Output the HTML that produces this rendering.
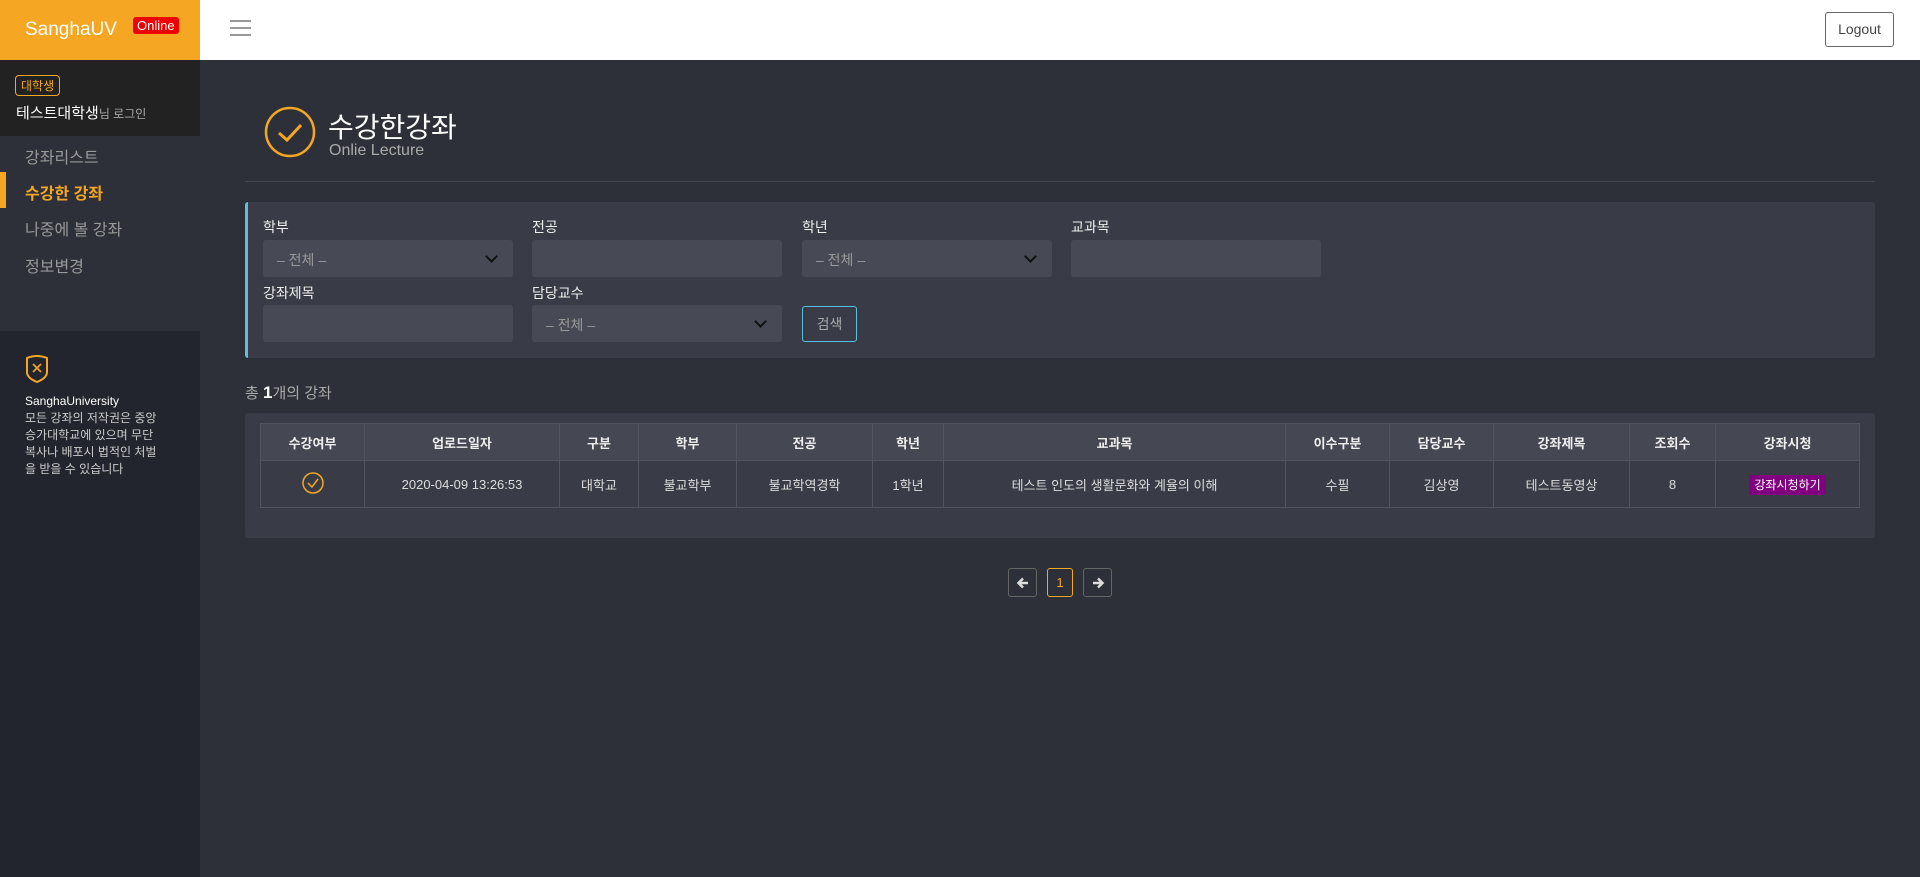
<!DOCTYPE html>
<html><head><meta charset="utf-8"><style>
*{box-sizing:border-box;margin:0;padding:0}
body{width:1920px;height:877px;overflow:hidden;background:#2e3039;font-family:"Liberation Sans","Noto Sans CJK KR",sans-serif;position:relative;color:#ddd}
.abs{position:absolute}
#logo{left:0;top:0;width:200px;height:60px;background:#f5a623}
#logo .t{left:25px;top:19px;color:#fff;font-size:19px}
#logo .b{left:133px;top:17px;background:#e00;color:#fff;font-size:13px;padding:1px 4px;border-radius:3px}
#top{left:200px;top:0;width:1720px;height:60px;background:#fff}
.hb{left:30px;width:21px;height:2px;background:#999}
#lo{left:1625px;top:12px;width:69px;height:35px;border:1px solid #666;border-radius:3px;color:#444;font-size:14px;text-align:center;line-height:33px}
#user{left:0;top:60px;width:200px;height:76px;background:#222}
#menu{left:0;top:136px;width:200px;height:195px;background:#2d3039}
#sf{left:0;top:331px;width:200px;height:546px;background:#22252d}
.mi{left:25px;font-size:16px;color:#999}
.lab{font-size:14px;color:#eee}
.inp{height:37px;width:250px;background:#474a55;border-radius:3px}
.sel:after{content:"";position:absolute;right:17px;top:12px;width:7px;height:7px;border-right:2px solid #111;border-bottom:2px solid #111;transform:rotate(45deg)}
.sel span{position:absolute;left:14px;top:10px;font-size:14px;color:#999}
table{border-collapse:collapse;position:absolute;left:260px;top:423px;width:1600px;font-size:13px}
th{background:#454753;height:37px;font-weight:bold;color:#eee;border:1px solid #52555f}
td{background:#393c47;height:47px;text-align:center;color:#ddd;border:1px solid #52555f}
.pg{top:568px;height:29px;border:1px solid #666;border-radius:3px;text-align:center;line-height:27px;font-size:13px;color:#ccc}
.pg svg{position:absolute;left:7px;top:7px}
</style></head><body>
<div id="logo" class="abs"><div class="abs t">SanghaUV</div><div class="abs b">Online</div></div>
<div id="top" class="abs"><div class="abs hb" style="top:20px"></div><div class="abs hb" style="top:27px"></div><div class="abs hb" style="top:34px"></div><div id="lo" class="abs">Logout</div></div>
<div id="user" class="abs"><div class="abs" style="left:15px;top:15px;border:1px solid #f5a623;border-radius:4px;color:#f5a623;font-size:12px;padding:1px 5px">대학생</div><div class="abs" style="left:16px;top:42px;font-size:15px;color:#fff">테스트대학생<span style="font-size:12px;color:#aaa">님 로그인</span></div></div>
<div id="menu" class="abs">
<div class="abs mi" style="top:8px">강좌리스트</div>
<div class="abs" style="left:0;top:36px;width:6px;height:36px;background:#f5a623"></div>
<div class="abs mi" style="top:44px;color:#f5a623;font-weight:bold">수강한 강좌</div>
<div class="abs mi" style="top:80px">나중에 볼 강좌</div>
<div class="abs mi" style="top:117px">정보변경</div>
</div>
<div id="sf" class="abs">
<svg class="abs" style="left:25px;top:23px" width="24" height="30" viewBox="0 0 24 30"><path d="M2 4 Q12 0 22 4 V18 Q22 24 12 28 Q2 24 2 18 Z" fill="none" stroke="#f5a623" stroke-width="2"/><path d="M8 10 L16 18 M16 10 L8 18" stroke="#f5a623" stroke-width="1.6"/></svg>
<div class="abs" style="left:25px;top:62px;width:145px;font-size:12px;line-height:17px;color:#ccc"><span style="color:#fff">SanghaUniversity</span><br>모든 강좌의 저작권은 중앙<br>승가대학교에 있으며 무단<br>복사나 배포시 법적인 처벌<br>을 받을 수 있습니다</div>
</div>
<svg class="abs" style="left:264px;top:106px" width="52" height="52"><circle cx="26" cy="26" r="24" fill="none" stroke="#f5a623" stroke-width="2.5"/><path d="M15 27 L23 34 L37 19" fill="none" stroke="#f5a623" stroke-width="3"/></svg>
<div class="abs" style="left:328px;top:106px;font-size:28px;color:#fff">수강한강좌</div>
<div class="abs" style="left:329px;top:142px;font-size:16px;color:#aaa">Onlie Lecture</div>
<div class="abs" style="left:245px;top:181px;width:1630px;height:1px;background:#444752"></div>
<div class="abs" style="left:245px;top:202px;width:1630px;height:156px;background:#393c47;border-left:3px solid #5bc0de;border-radius:3px"></div>
<div class="abs lab" style="left:263px;top:217px">학부</div>
<div class="abs lab" style="left:532px;top:217px">전공</div>
<div class="abs lab" style="left:802px;top:217px">학년</div>
<div class="abs lab" style="left:1071px;top:217px">교과목</div>
<div class="abs inp sel" style="left:263px;top:240px"><span>– 전체 –</span></div>
<div class="abs inp" style="left:532px;top:240px"></div>
<div class="abs inp sel" style="left:802px;top:240px"><span>– 전체 –</span></div>
<div class="abs inp" style="left:1071px;top:240px"></div>
<div class="abs lab" style="left:263px;top:283px">강좌제목</div>
<div class="abs lab" style="left:532px;top:283px">담당교수</div>
<div class="abs inp" style="left:263px;top:305px"></div>
<div class="abs inp sel" style="left:532px;top:305px"><span>– 전체 –</span></div>
<div class="abs" style="left:802px;top:306px;width:55px;height:36px;border:1px solid #5bc0de;border-radius:3px;color:#aaa;font-size:14px;text-align:center;line-height:34px">검색</div>
<div class="abs" style="left:245px;top:382px;font-size:15px;color:#aaa">총 <b style="color:#fff;font-size:17px">1</b>개의 강좌</div>
<div class="abs" style="left:245px;top:413px;width:1630px;height:125px;background:#393c47;border-radius:3px"></div>
<table><tr><th style="width:104px">수강여부</th><th style="width:195px">업로드일자</th><th style="width:79px">구분</th><th style="width:98px">학부</th><th style="width:136px">전공</th><th style="width:71px">학년</th><th style="width:342px">교과목</th><th style="width:104px">이수구분</th><th style="width:104px">담당교수</th><th style="width:136px">강좌제목</th><th style="width:86px">조회수</th><th>강좌시청</th></tr>
<tr><td><svg width="24" height="24"><circle cx="12" cy="12" r="10" fill="none" stroke="#f5a623" stroke-width="1.5"/><path d="M7 12 L11 16 L17 8" fill="none" stroke="#f5a623" stroke-width="1.5"/></svg></td><td>2020-04-09 13:26:53</td><td>대학교</td><td>불교학부</td><td>불교학역경학</td><td>1학년</td><td>테스트 인도의 생활문화와 계율의 이해</td><td>수필</td><td>김상영</td><td>테스트동영상</td><td>8</td><td><span style="background:#800080;color:#fff;padding:3px 5px;border-radius:2px;font-size:12px">강좌시청하기</span></td></tr></table>
<div class="abs pg" style="left:1008px;width:29px"><svg width="14" height="14" viewBox="0 0 14 14"><path d="M12 7 H3 M7 2.5 L2.5 7 L7 11.5" fill="none" stroke="#ddd" stroke-width="2.5"/></svg></div>
<div class="abs pg" style="left:1047px;width:26px;border-color:#f5a623;color:#f5a623">1</div>
<div class="abs pg" style="left:1083px;width:29px"><svg width="14" height="14" viewBox="0 0 14 14"><path d="M2 7 H11 M7 2.5 L11.5 7 L7 11.5" fill="none" stroke="#ddd" stroke-width="2.5"/></svg></div>
</body></html>
